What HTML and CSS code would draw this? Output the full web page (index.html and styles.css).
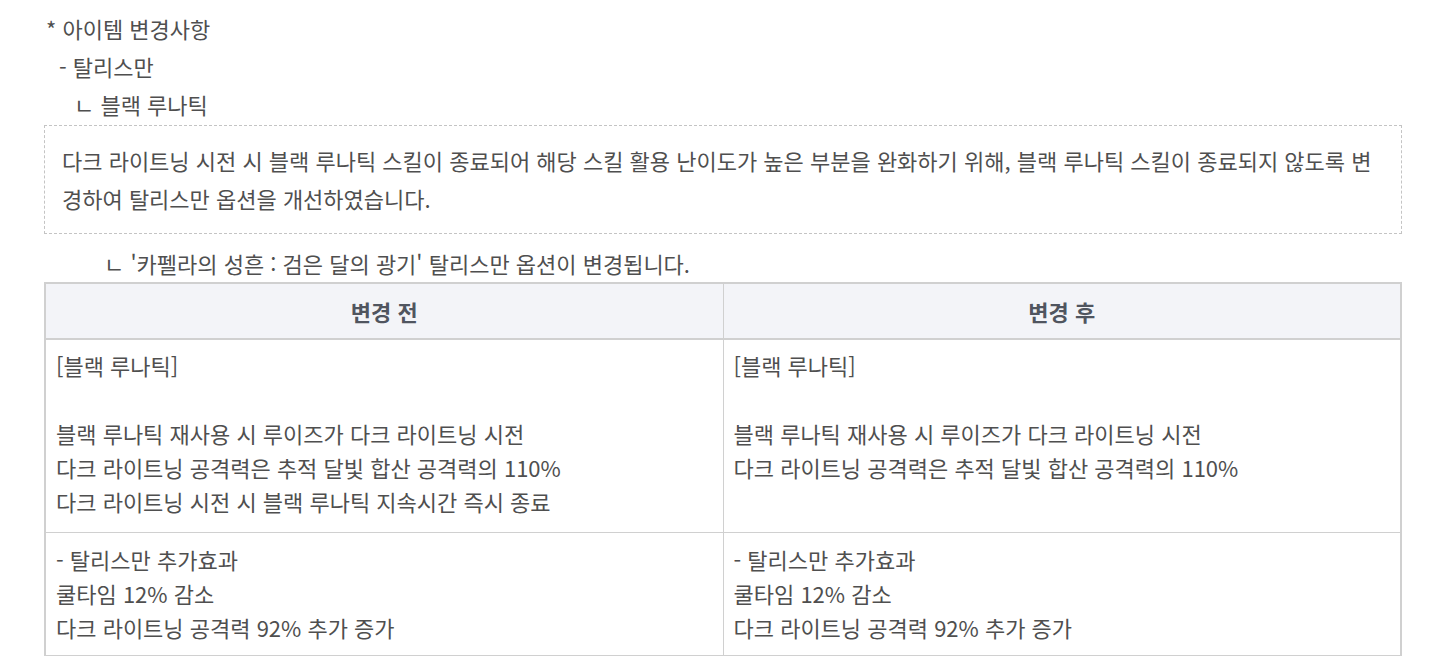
FILE: index.html
```html
<!DOCTYPE html>
<html lang="ko">
<head>
  <meta charset="UTF-8" />
  <title>아이템 변경사항</title>
  <link rel="stylesheet" href="styles.css">
</head>
<body>
  <main class="notice">
    <p class="line">* 아이템 변경사항</p>
    <p class="line lv1">- 탈리스만</p>
    <p class="line lv2">ㄴ 블랙 루나틱</p>

    <div class="note_box">
      다크 라이트닝 시전 시 블랙 루나틱 스킬이 종료되어 해당 스킬 활용 난이도가 높은 부분을 완화하기 위해, 블랙 루나틱 스킬이 종료되지 않도록 변경하여 탈리스만 옵션을 개선하였습니다.
    </div>

    <p class="line lv3">ㄴ '카펠라의 성흔 : 검은 달의 광기' 탈리스만 옵션이 변경됩니다.</p>

    <table class="change_table">
      <thead>
        <tr>
          <th>변경 전</th>
          <th>변경 후</th>
        </tr>
      </thead>
      <tbody>
        <tr class="row_skill">
          <td>
            [블랙 루나틱]<br><br>
            블랙 루나틱 재사용 시 루이즈가 다크 라이트닝 시전<br>
            다크 라이트닝 공격력은 추적 달빛 합산 공격력의 110%<br>
            다크 라이트닝 시전 시 블랙 루나틱 지속시간 즉시 종료
          </td>
          <td>
            [블랙 루나틱]<br><br>
            블랙 루나틱 재사용 시 루이즈가 다크 라이트닝 시전<br>
            다크 라이트닝 공격력은 추적 달빛 합산 공격력의 110%
          </td>
        </tr>
        <tr class="row_bonus">
          <td>
            - 탈리스만 추가효과<br>
            쿨타임 12% 감소<br>
            다크 라이트닝 공격력 92% 추가 증가
          </td>
          <td>
            - 탈리스만 추가효과<br>
            쿨타임 12% 감소<br>
            다크 라이트닝 공격력 92% 추가 증가
          </td>
        </tr>
      </tbody>
    </table>
  </main>
</body>
</html>
```

FILE: styles.css
```css
body {
  margin: 0;
  background: #fff;
  color: #4f4f4f;
  font-family: "Noto Sans CJK KR", "Noto Sans", sans-serif;
  font-size: 22px;
}

.notice {
  padding: 9px 38px 0 44px;
}

.line {
  margin: 0;
  line-height: 38px;
  padding-left: 2px;
}

.line.lv1 {
  padding-left: 15px;
}

.line.lv2 {
  padding-left: 30px;
}

.line.lv3 {
  padding-left: 60px;
}

.note_box {
  margin: 2px 0 10px;
  padding: 15px 17px 16px;
  border: 1px dashed #c4c4c4;
  line-height: 38px;
}

.change_table {
  width: 100%;
  border-collapse: collapse;
  table-layout: fixed;
  border: 2px solid #d0d0d0;
}

.change_table th {
  height: 54px;
  padding: 0;
  background: #f3f4f8;
  color: #50555f;
  font-weight: bold;
  text-align: center;
  border: 1px solid #d0d0d0;
  border-bottom-width: 2px;
}

.change_table td {
  padding: 8px 10px 11px;
  line-height: 34px;
  vertical-align: top;
  border: 1px solid #d0d0d0;
}

.row_skill td {
  padding-bottom: 14px;
}

.row_bonus td {
  padding-top: 9px;
}
```
